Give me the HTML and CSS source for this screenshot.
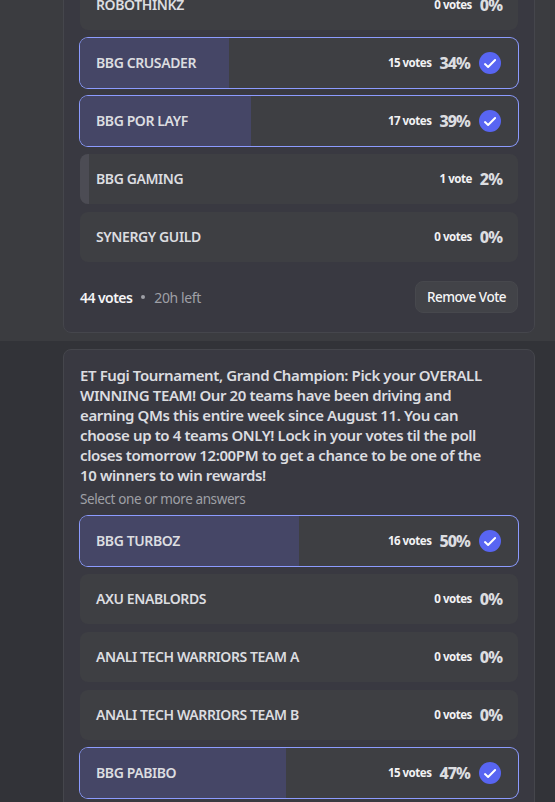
FILE: index.html
```
<!DOCTYPE html>
<html lang="en">
<head>
    <meta charset="UTF-8">
    <meta name="viewport" content="width=device-width, initial-scale=1.0">
    <title>Polls</title>
    <link rel="stylesheet" href="styles.css">
</head>
<body>
    <svg width="0" height="0" class="defs">
        <symbol id="check" viewBox="0 0 22 22">
            <circle cx="11" cy="11" r="11" fill="#5865f2"/>
            <path d="M6 12.1 L9.1 15 L16.1 8" fill="none" stroke="#fff" stroke-width="2" stroke-linecap="round" stroke-linejoin="round"/>
        </symbol>
    </svg>

    <div class="message hovered">
        <div class="poll scrolled">
            <div class="answers">
                <div class="answer">
                    <span class="name">ROBOTHINKZ</span>
                    <span class="votes">0 votes</span>
                    <span class="percent">0%</span>
                </div>
                <div class="answer selected">
                    <div class="bar" style="width: 34%"></div>
                    <span class="name">BBG CRUSADER</span>
                    <span class="votes">15 votes</span>
                    <span class="percent">34%</span>
                    <svg class="check"><use href="#check"/></svg>
                </div>
                <div class="answer selected">
                    <div class="bar" style="width: 39%"></div>
                    <span class="name">BBG POR LAYF</span>
                    <span class="votes">17 votes</span>
                    <span class="percent">39%</span>
                    <svg class="check"><use href="#check"/></svg>
                </div>
                <div class="answer">
                    <div class="bar" style="width: 2%"></div>
                    <span class="name">BBG GAMING</span>
                    <span class="votes">1 vote</span>
                    <span class="percent">2%</span>
                </div>
                <div class="answer">
                    <span class="name">SYNERGY GUILD</span>
                    <span class="votes">0 votes</span>
                    <span class="percent">0%</span>
                </div>
            </div>
            <div class="footer">
                <span class="total">44 votes</span>
                <span class="dot"></span>
                <span class="time">20h left</span>
                <button>Remove Vote</button>
            </div>
        </div>
    </div>

    <div class="message">
        <div class="poll">
            <h2>ET Fugi Tournament, Grand Champion: Pick your OVERALL<br>
                WINNING TEAM! Our 20 teams have been driving and<br>
                earning QMs this entire week since August 11. You can<br>
                choose up to 4 teams ONLY! Lock in your votes til the poll<br>
                closes tomorrow 12:00PM to get a chance to be one of the<br>
                10 winners to win rewards!</h2>
            <p class="hint">Select one or more answers</p>
            <div class="answers">
                <div class="answer selected">
                    <div class="bar" style="width: 50%"></div>
                    <span class="name">BBG TURBOZ</span>
                    <span class="votes">16 votes</span>
                    <span class="percent">50%</span>
                    <svg class="check"><use href="#check"/></svg>
                </div>
                <div class="answer">
                    <span class="name">AXU ENABLORDS</span>
                    <span class="votes">0 votes</span>
                    <span class="percent">0%</span>
                </div>
                <div class="answer">
                    <span class="name">ANALI TECH WARRIORS TEAM A</span>
                    <span class="votes">0 votes</span>
                    <span class="percent">0%</span>
                </div>
                <div class="answer">
                    <span class="name">ANALI TECH WARRIORS TEAM B</span>
                    <span class="votes">0 votes</span>
                    <span class="percent">0%</span>
                </div>
                <div class="answer selected">
                    <div class="bar" style="width: 47%"></div>
                    <span class="name">BBG PABIBO</span>
                    <span class="votes">15 votes</span>
                    <span class="percent">47%</span>
                    <svg class="check"><use href="#check"/></svg>
                </div>
            </div>
        </div>
    </div>
</body>
</html>
```
FILE: styles.css
```
* {
    box-sizing: border-box;
}
body {
    margin: 0;
    height: 802px;
    overflow: hidden;
    background-color: #323338;
    color: #dcdde0;
    font-family: "Noto Sans", sans-serif;
}
.defs {
    display: block;
}
.message {
    display: flow-root;
    padding: 0 20px 8px 63px;
}
.hovered {
    background-color: #3b3c40;
}
.poll {
    width: 472px;
    margin-top: 8px;
    padding: 16px;
    background-color: #393941;
    border: 1px solid #45464c;
    border-radius: 8px;
}
/* top of the first poll is above the viewport */
.scrolled {
    margin-top: -37px;
    padding-bottom: 19px;
}
h2 {
    margin: -1px 0 0;
    font-size: 15px;
    font-weight: 600;
    line-height: 20px;
    letter-spacing: -0.39px;
    white-space: nowrap;
}
.hint {
    margin: 5px 0 8px;
    font-size: 13.5px;
    line-height: 18px;
    letter-spacing: -0.4px;
    color: #9fa0a6;
}
.answers {
    display: grid;
    gap: 8px;
}
.answer {
    position: relative;
    display: flex;
    align-items: center;
    height: 50px;
    padding: 0 16px;
    border-radius: 8px;
    background-color: #3e3f43;
    overflow: hidden;
}
.selected {
    box-shadow: 0 0 0 1px #8c9bff;
}
.bar {
    position: absolute;
    left: 0;
    top: 0;
    bottom: 0;
    background-color: #4c4c54;
}
.selected .bar {
    background-color: #454666;
}
.name {
    position: relative;
    flex: 1;
    padding-bottom: 2px;
    font-size: 14px;
    font-weight: 600;
    letter-spacing: -0.4px;
}
.votes {
    margin-right: 8px;
    padding-bottom: 1px;
    font-size: 11.5px;
    font-weight: 700;
    letter-spacing: -0.5px;
    color: #f2f2f4;
}
.percent {
    padding-bottom: 1px;
    font-size: 16px;
    font-weight: 800;
    letter-spacing: -0.9px;
}
.check {
    width: 22px;
    height: 22px;
    margin: 0 1px 0 9px;
}
.footer {
    display: flex;
    align-items: center;
    margin-top: 19px;
    font-size: 14px;
}
.total {
    font-weight: 600;
    letter-spacing: -0.55px;
    color: #f5f5f6;
}
.dot {
    width: 4px;
    height: 4px;
    margin: 0 9px;
    border-radius: 50%;
    background-color: #9fa0a6;
}
.time {
    flex: 1;
    letter-spacing: -0.4px;
    color: #9fa0a6;
}
button {
    width: 103px;
    height: 32px;
    padding: 0;
    border: 1px solid #47484d;
    border-radius: 8px;
    background-color: #424348;
    color: #f5f5f6;
    font-family: inherit;
    font-size: 13.5px;
    font-weight: 550;
    letter-spacing: -0.5px;
}
```
